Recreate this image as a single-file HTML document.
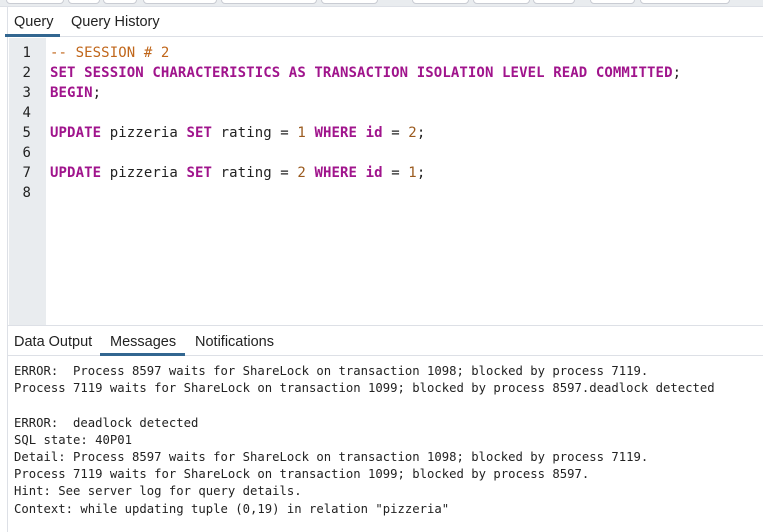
<!DOCTYPE html>
<html><head><meta charset="utf-8"><style>
*{margin:0;padding:0;box-sizing:border-box}
body{width:763px;height:532px;overflow:hidden;background:#fff;font-family:"Liberation Sans",sans-serif;position:relative}
.top{position:absolute;left:0;top:0;width:763px;height:7px;background:#e9ecef;border-bottom:1px solid #dde0e6}
.btn{position:absolute;top:-6px;height:10px;border:1px solid #c9ccd3;border-radius:4px;background:#fff}
.left{position:absolute;left:0;top:7px;width:8px;height:525px;background:#fff;border-right:1px solid #dde0e6}
.tabs{position:absolute;left:8px;height:31px;width:755px;border-bottom:1px solid #dde0e6;font-size:14.5px;color:#222}
.tabs span{position:absolute;top:8px}
.ul{position:absolute;height:3px;background:#326690;bottom:-1px}
.gut{position:absolute;left:9px;top:38px;width:37px;height:287px;background:#e9ecef}
.code{position:absolute;font-family:"DejaVu Sans Mono",monospace;font-size:14px;letter-spacing:0.1px;line-height:20px;white-space:pre;color:#222}
.ln{left:9px;width:22px;text-align:right;top:43px;color:#222}
.src{left:50px;top:43px}
.k{color:#a0148c;font-weight:bold}
.c{color:#c0661a}
.n{color:#9a5a1e}
.msg{position:absolute;left:14px;top:363px;font-family:"DejaVu Sans Mono",monospace;font-size:12.25px;line-height:17.2px;white-space:pre;color:#222}
</style></head><body>
<div class="top">
<div class="btn" style="left:6px;width:58px"></div>
<div class="btn" style="left:68px;width:32px"></div>
<div class="btn" style="left:103px;width:34px"></div>
<div class="btn" style="left:143px;width:74px"></div>
<div class="btn" style="left:221px;width:96px"></div>
<div class="btn" style="left:321px;width:57px"></div>
<div class="btn" style="left:412px;width:57px"></div>
<div class="btn" style="left:473px;width:57px"></div>
<div class="btn" style="left:533px;width:42px"></div>
<div class="btn" style="left:590px;width:45px"></div>
<div class="btn" style="left:640px;width:90px"></div>
</div>
<div class="left"></div>
<div class="tabs" style="top:6px"><span style="left:6px">Query</span><span style="left:63px">Query History</span><div class="ul" style="left:-3px;width:55px"></div></div>
<div class="gut"></div>
<div class="code ln">1
2
3
4
5
6
7
8</div>
<div class="code src"><span class="c">-- SESSION # 2</span>
<span class="k">SET SESSION CHARACTERISTICS AS TRANSACTION ISOLATION LEVEL READ COMMITTED</span>;
<span class="k">BEGIN</span>;

<span class="k">UPDATE</span> pizzeria <span class="k">SET</span> rating = <span class="n">1</span> <span class="k">WHERE</span> <span class="k">id</span> = <span class="n">2</span>;

<span class="k">UPDATE</span> pizzeria <span class="k">SET</span> rating = <span class="n">2</span> <span class="k">WHERE</span> <span class="k">id</span> = <span class="n">1</span>;
</div>
<div class="tabs" style="top:325px;border-top:1px solid #dde0e6"><span style="left:6px">Data Output</span><span style="left:102px">Messages</span><span style="left:187px">Notifications</span><div class="ul" style="left:92px;width:85px"></div></div>
<div class="msg">ERROR:  Process 8597 waits for ShareLock on transaction 1098; blocked by process 7119.
Process 7119 waits for ShareLock on transaction 1099; blocked by process 8597.deadlock detected

ERROR:  deadlock detected
SQL state: 40P01
Detail: Process 8597 waits for ShareLock on transaction 1098; blocked by process 7119.
Process 7119 waits for ShareLock on transaction 1099; blocked by process 8597.
Hint: See server log for query details.
Context: while updating tuple (0,19) in relation "pizzeria"</div>
</body></html>
